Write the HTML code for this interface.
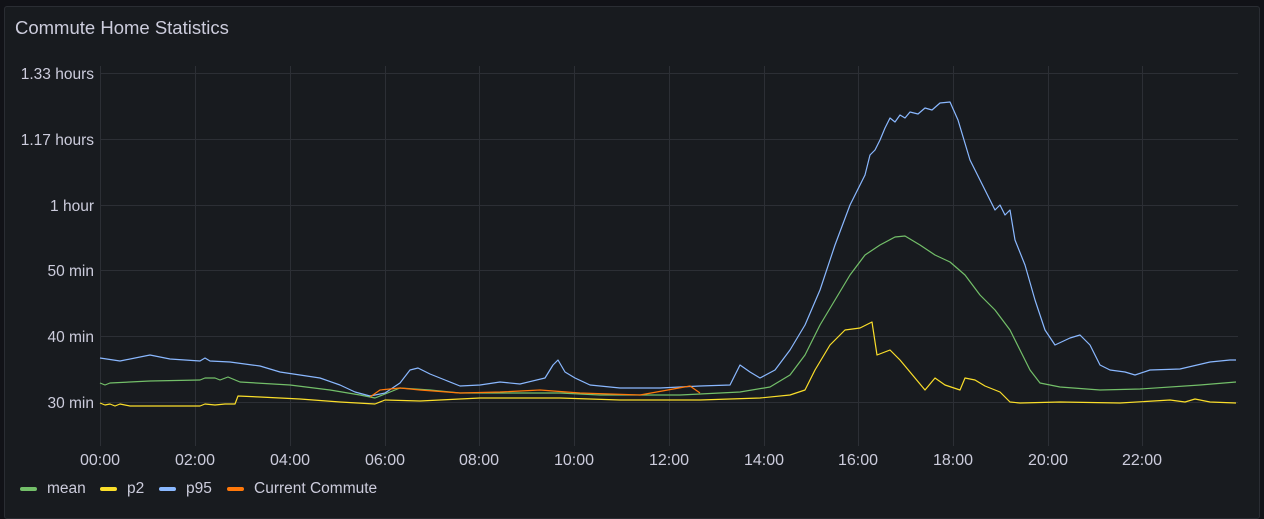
<!DOCTYPE html>
<html><head><style>
body{margin:0;background:#111217;width:1264px;height:519px;overflow:hidden;font-family:"Liberation Sans",sans-serif;}
.panel{position:absolute;left:4px;top:6px;width:1254px;height:511px;background:#181b1f;border:1px solid #2a2d33;border-radius:3px;}
.t{position:absolute;left:15px;top:17px;color:#ccccdc;font-size:18.5px;font-weight:500;}
svg{position:absolute;left:0;top:0}
.yl{fill:#ccccdc;font-size:15.5px;text-anchor:end}
.xl{fill:#ccccdc;font-size:16px;text-anchor:middle}
.lg{position:absolute;top:480px;left:20px;color:#ccccdc;font-size:15.5px;}
.lg span{position:absolute;display:inline-flex;align-items:center;white-space:nowrap;top:0}
.lg i{display:inline-block;width:17px;height:4px;border-radius:2px;margin-right:10px}
</style></head><body>
<div class="panel"></div>
<div class="t">Commute Home Statistics</div>
<svg width="1264" height="519">
<g stroke="#2c2f35" stroke-width="1">
<line x1="100" y1="73.5" x2="1238" y2="73.5"/><line x1="100" y1="139.5" x2="1238" y2="139.5"/><line x1="100" y1="205.5" x2="1238" y2="205.5"/><line x1="100" y1="270.5" x2="1238" y2="270.5"/><line x1="100" y1="336.5" x2="1238" y2="336.5"/><line x1="100" y1="402.5" x2="1238" y2="402.5"/>
<line x1="100.5" y1="66" x2="100.5" y2="446"/><line x1="195.5" y1="66" x2="195.5" y2="446"/><line x1="290.5" y1="66" x2="290.5" y2="446"/><line x1="385.5" y1="66" x2="385.5" y2="446"/><line x1="479.5" y1="66" x2="479.5" y2="446"/><line x1="574.5" y1="66" x2="574.5" y2="446"/><line x1="669.5" y1="66" x2="669.5" y2="446"/><line x1="764.5" y1="66" x2="764.5" y2="446"/><line x1="858.5" y1="66" x2="858.5" y2="446"/><line x1="953.5" y1="66" x2="953.5" y2="446"/><line x1="1048.5" y1="66" x2="1048.5" y2="446"/><line x1="1142.5" y1="66" x2="1142.5" y2="446"/>
</g>
<text class="yl" x="94" y="79">1.33 hours</text><text class="yl" x="94" y="145">1.17 hours</text><text class="yl" x="94" y="211">1 hour</text><text class="yl" x="94" y="276">50 min</text><text class="yl" x="94" y="342">40 min</text><text class="yl" x="94" y="408">30 min</text>
<g><text class="xl" x="100" y="465">00:00</text><text class="xl" x="195" y="465">02:00</text><text class="xl" x="290" y="465">04:00</text><text class="xl" x="385" y="465">06:00</text><text class="xl" x="479" y="465">08:00</text><text class="xl" x="574" y="465">10:00</text><text class="xl" x="669" y="465">12:00</text><text class="xl" x="764" y="465">14:00</text><text class="xl" x="858" y="465">16:00</text><text class="xl" x="953" y="465">18:00</text><text class="xl" x="1048" y="465">20:00</text><text class="xl" x="1142" y="465">22:00</text></g>
<g fill="none" stroke-width="1.2" stroke-linejoin="round">
<polyline stroke="#fade2a" points="100,403 105,405 110,404 115,406 120,404 130,406 200,406 205,404 215,405 225,404 235,404 238,396 260,397 300,399 340,402 375,404 385,400 420,401 480,398 560,398 620,400 700,400 760,398 790,395 805,390 815,370 830,345 845,330 860,328 872,322 877,355 890,350 900,360 910,372 925,390 935,378 945,385 960,390 965,378 975,380 985,386 1000,392 1010,402 1020,403 1060,402 1120,403 1170,400 1185,402 1195,399 1210,402 1236,403"/>
<polyline stroke="#73bf69" points="100,383 105,385 110,383 150,381 200,380 205,378 215,378 220,380 228,377 240,382 290,385 330,390 360,395 375,398 400,388 430,390 460,393 500,393 560,393 600,395 680,395 740,392 770,387 790,375 805,355 820,325 835,300 850,275 865,255 880,245 895,237 905,236 920,245 935,255 950,262 965,275 980,295 995,310 1010,330 1020,350 1030,370 1040,383 1060,387 1100,390 1140,389 1200,385 1236,382"/>
<polyline stroke="#8ab8ff" points="100,358 120,361 150,355 170,359 200,361 205,358 210,361 230,362 260,366 280,372 300,375 320,378 340,385 355,392 370,396 385,393 400,383 410,370 418,368 430,374 445,380 460,386 480,385 500,382 520,384 545,378 553,365 558,360 565,372 575,378 590,385 620,388 660,388 700,386 730,385 740,365 750,372 760,378 775,370 790,350 805,325 820,290 835,245 850,205 860,185 865,175 870,155 875,150 880,140 885,128 890,118 895,122 900,115 905,118 910,112 918,114 925,108 932,110 940,103 950,102 958,120 970,160 985,190 990,200 995,210 1000,205 1005,215 1010,210 1015,240 1025,265 1035,300 1045,330 1055,345 1070,338 1080,335 1090,345 1100,365 1110,370 1125,372 1135,375 1150,370 1180,369 1210,362 1230,360 1236,360"/>
<polyline stroke="#ff780a" points="370,397 380,390 400,388 420,390 460,393 500,392 540,390 580,393 640,395 690,386 700,393"/>
</g>
</svg>
<div class="lg"><span style="left:0"><i style="background:#73bf69"></i>mean</span><span style="left:80px"><i style="background:#fade2a"></i>p2</span><span style="left:139px"><i style="background:#8ab8ff"></i>p95</span><span style="left:207px"><i style="background:#ff780a"></i>Current Commute</span></div>
</body></html>
